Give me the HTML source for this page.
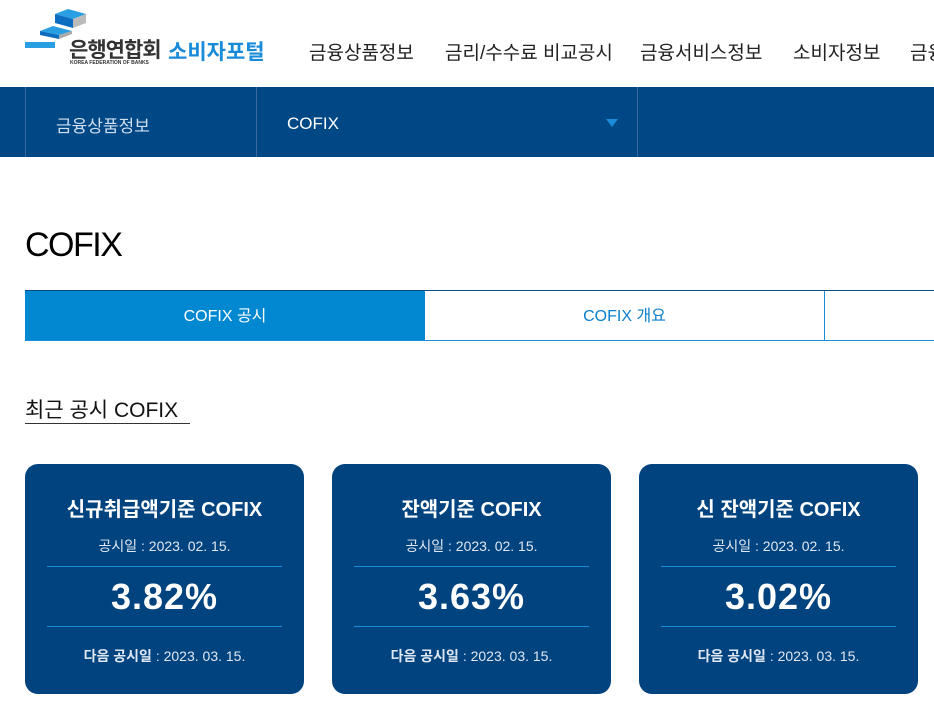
<!DOCTYPE html><html><head><meta charset="utf-8"><style>
*{margin:0;padding:0;box-sizing:border-box}
body{width:934px;height:709px;overflow:hidden;background:#fff;font-family:"Liberation Sans","Noto Sans CJK KR",sans-serif;position:relative}
.a{position:absolute}
.gnb{top:38px;font-size:19px;color:#222;white-space:nowrap}
.card{top:464px;width:279px;height:230px;background:#00437f;border-radius:13px;color:#fff;text-align:center}
.card .t{position:absolute;top:29px;width:100%;font-size:20px;font-weight:bold}
.card .d{position:absolute;top:72px;width:100%;font-size:14px;color:#dfe8f2}
.card .l{position:absolute;left:22px;right:22px;height:1px;background:#1a8bd8}
.card .p{position:absolute;top:112px;width:100%;font-size:36px;font-weight:bold;letter-spacing:1px}
.card .n{position:absolute;top:182px;width:100%;font-size:14px;color:#dfe8f2}
</style></head><body>
<svg class="a" style="left:24px;top:8px" width="64" height="42">
<polygon points="31,6 44,1 62,6 49,11" fill="#2a9ee2"/><polygon points="31,6 49,11 49,20 31,15" fill="#0b6cc0"/><polygon points="49,11 62,6 62,15 49,20" fill="#bbb"/>
<polygon points="16,23 29,18 48,23 35,27" fill="#2a9ee2"/><polygon points="16,23 35,27 35,31 16,27" fill="#0b6cc0"/><polygon points="35,27 48,23 48,26 35,31" fill="#aaa"/>
<rect x="1" y="34" width="30" height="6" fill="#2a9ee2"/></svg>
<div class="a" style="left:69px;top:34px;font-size:21px;font-weight:bold;color:#333;letter-spacing:-1px">은행연합회</div>
<div class="a" style="left:70px;top:60px;font-size:5px;color:#333;font-weight:bold">KOREA FEDERATION OF BANKS</div>
<div class="a" style="left:168px;top:36px;font-size:21px;font-weight:bold;color:#1a8bd8">소비자포털</div>
<div class="a gnb" style="left:309px">금융상품정보</div>
<div class="a gnb" style="left:445px">금리/수수료 비교공시</div>
<div class="a gnb" style="left:640px">금융서비스정보</div>
<div class="a gnb" style="left:793px">소비자정보</div>
<div class="a gnb" style="left:910px">금융</div>
<div class="a" style="left:0;top:87px;width:934px;height:70px;background:#004785"></div>
<div class="a" style="left:25px;top:87px;width:1px;height:70px;background:#3a6aa0"></div>
<div class="a" style="left:256px;top:87px;width:1px;height:70px;background:#3a6aa0"></div>
<div class="a" style="left:637px;top:87px;width:1px;height:70px;background:#3a6aa0"></div>
<div class="a" style="left:56px;top:112px;font-size:17px;color:#cfe0f0">금융상품정보</div>
<div class="a" style="left:287px;top:114px;font-size:17px;color:#fff">COFIX</div>
<div class="a" style="left:606px;top:119px;width:0;height:0;border-left:6px solid transparent;border-right:6px solid transparent;border-top:8px solid #1a8bd8"></div>
<div class="a" style="left:25px;top:226px;font-size:34px;color:#000;letter-spacing:-1.5px">COFIX</div>
<div class="a" style="left:25px;top:290px;width:909px;height:51px;border-top:1px solid #0a4a84;border-bottom:1px solid #1a8bd8"></div>
<div class="a" style="left:25px;top:291px;width:400px;height:49px;background:#0288d1;color:#fff;font-size:16px;text-align:center;line-height:51px">COFIX 공시</div>
<div class="a" style="left:425px;top:291px;width:400px;height:49px;border-right:1px solid #1a8bd8;color:#0a7fcc;font-size:16px;text-align:center;line-height:51px">COFIX 개요</div>
<div class="a" style="left:25px;top:394px;font-size:21px;color:#111">최근 공시 COFIX</div>
<div class="a" style="left:25px;top:423px;width:165px;height:1px;background:#333"></div>
<div class="a card" style="left:25px"><div class="t">신규취급액기준 COFIX</div><div class="d">공시일 : 2023. 02. 15.</div><div class="l" style="top:102px"></div><div class="p">3.82%</div><div class="l" style="top:162px"></div><div class="n"><b>다음 공시일</b> : 2023. 03. 15.</div></div>
<div class="a card" style="left:332px"><div class="t">잔액기준 COFIX</div><div class="d">공시일 : 2023. 02. 15.</div><div class="l" style="top:102px"></div><div class="p">3.63%</div><div class="l" style="top:162px"></div><div class="n"><b>다음 공시일</b> : 2023. 03. 15.</div></div>
<div class="a card" style="left:639px"><div class="t">신 잔액기준 COFIX</div><div class="d">공시일 : 2023. 02. 15.</div><div class="l" style="top:102px"></div><div class="p">3.02%</div><div class="l" style="top:162px"></div><div class="n"><b>다음 공시일</b> : 2023. 03. 15.</div></div>
</body></html>
